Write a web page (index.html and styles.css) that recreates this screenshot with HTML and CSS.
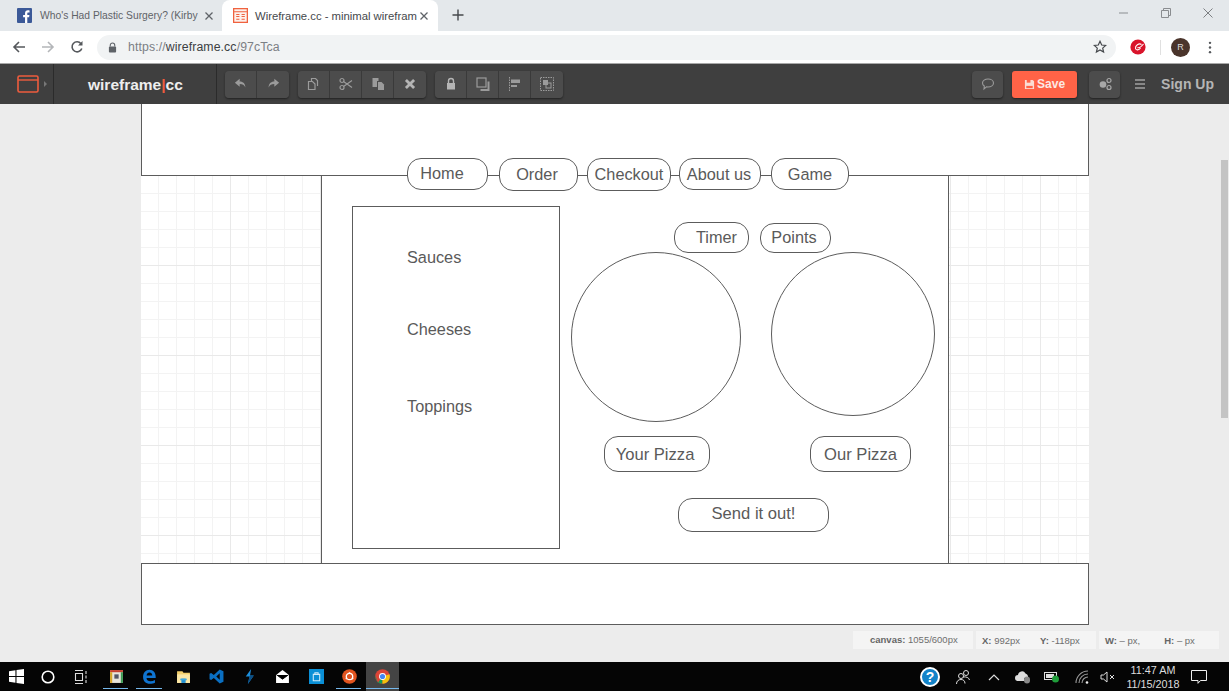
FILE: index.html
```html
<!DOCTYPE html>
<html>
<head>
<meta charset="utf-8"/>
<title>Wireframe.cc - minimal wireframing tool</title>
<link rel="stylesheet" href="styles.css">
</head>
<body>
<div class="tabstrip">
  <div class="tab tab-first">
    <svg class="tab-icon" viewBox="0 0 14 14"><rect width="14" height="14" rx="1" fill="#3b5998"/><path d="M9.6 14V8.6h1.7l.3-2.1h-2V5.2c0-.6.2-1 1-1h1.1V2.300c-.2 0-.8-.1-1.500-.1-1.600 0-2.700 1-2.700 2.700v1.600H5.700v2.100h1.800V14z" fill="#fff"/></svg>
    <span class="tab-title">Who's Had Plastic Surgery? (Kirby</span>
    <svg class="tab-close" viewBox="0 0 10 10"><path d="M1.500 1.500l7 7M8.500 1.500l-7 7" stroke="#5f6368" stroke-width="1.300"/></svg>
  </div>
  <div class="tab tab-active">
    <svg class="tab-icon" viewBox="0 0 14 14"><rect x=".6" y=".6" width="12.800" height="12.800" fill="#fdf1ec" stroke="#f0623f" stroke-width="1.200"/><path d="M1 3.500h12M3 6h3M3 8h3M3 10.500h3M8 6h3M8 8h3M8 10.500h3" stroke="#f0623f"/></svg>
    <span class="tab-title">Wireframe.cc - minimal wirefram</span>
    <svg class="tab-close" viewBox="0 0 10 10"><path d="M1.500 1.500l7 7M8.500 1.500l-7 7" stroke="#5f6368" stroke-width="1.300"/></svg>
  </div>
  <svg class="new-tab" viewBox="0 0 12 12"><path d="M6 .5v11M.5 6h11" stroke="#45484c" stroke-width="1.400"/></svg>
  <div class="window-btns">
    <svg viewBox="0 0 12 12"><path d="M1 6h9" stroke="#9a9da0" stroke-width="1.200"/></svg>
    <svg viewBox="0 0 12 12"><path d="M1.500 3.500h7v7h-7zM3.500 3.500v-2h7v7h-2" fill="none" stroke="#8a8d90"/></svg>
    <svg viewBox="0 0 12 12"><path d="M1.500 1.500l9 9M10.500 1.500l-9 9" stroke="#7c7f82"/></svg>
  </div>
</div>

<div class="addressbar">
  <svg class="nav-icon" viewBox="0 0 14 14"><path d="M13 7H2M7 2L2 7l5 5" fill="none" stroke="#55585c" stroke-width="1.600"/></svg>
  <svg class="nav-icon" viewBox="0 0 14 14"><path d="M1 7h11M7 2l5 5-5 5" fill="none" stroke="#b4b6b9" stroke-width="1.600"/></svg>
  <svg class="nav-icon" viewBox="0 0 14 14"><path d="M11.800 8.500A5 5 0 1 1 11 3.700" fill="none" stroke="#55585c" stroke-width="1.600"/><path d="M12.500 1v4.500H8z" fill="#55585c"/></svg>
  <div class="omnibox">
    <svg class="lock" viewBox="0 0 10 12"><path d="M2.500 5V3.500a2.500 2.500 0 0 1 5 0V5" fill="none" stroke="#5f6368" stroke-width="1.200"/><rect x="1" y="5" width="8" height="6.500" rx="1" fill="#5f6368"/></svg>
    <span class="url"><span class="url-dim">https://</span>wireframe.cc<span class="url-dim">/97cTca</span></span>
    <svg class="star" viewBox="0 0 14 14"><path d="M7 1.300l1.700 3.700 4 .4-3 2.700.9 4L7 10l-3.600 2.100.9-4-3-2.700 4-.4z" fill="none" stroke="#45484c" stroke-width="1.200"/></svg>
  </div>
  <svg class="trend" viewBox="0 0 16 16"><circle cx="8" cy="8" r="7.600" fill="#d9142b"/><path d="M11.500 5.500C9 3.800 5 6.500 5.500 9.500c.4 2 3.500 1.800 5-.5M7.500 8.500c1.500 1 3.500-.5 6-3.500" fill="none" stroke="#fff" stroke-width="1.100"/></svg>
  <span class="bar-sep"></span>
  <span class="avatar">R</span>
  <svg class="menu-dots" viewBox="0 0 4 14"><circle cx="2" cy="2" r="1.300" fill="#55585c"/><circle cx="2" cy="7" r="1.300" fill="#55585c"/><circle cx="2" cy="12" r="1.300" fill="#55585c"/></svg>
</div>

<div class="toolbar">
  <div class="tb-logo-icon">
    <svg class="pages-icon" viewBox="0 0 22 18"><rect x="1" y="1" width="20" height="16" rx="1.500" fill="none" stroke="#ee5c3e" stroke-width="1.600"/><path d="M1 5h20" stroke="#ee5c3e" stroke-width="1.400"/></svg>
    <span class="caret"></span>
  </div>
  <div class="tb-logo">wireframe<span class="logo-bar">|</span>cc</div>
  <div class="tb-groups">
    <div class="btn-group">
      <span class="tb-btn"><svg viewBox="0 0 16 14"><path d="M6.500 1L1 5.500 6.500 10V7c3.500 0 5 1 6.500 4 0-4.500-2.500-7-6.500-7z" fill="#9b9b9b"/></svg></span>
      <span class="tb-btn"><svg viewBox="0 0 16 14"><path d="M9.500 1L15 5.500 9.500 10V7C6 7 4.500 8 3 11c0-4.500 2.500-7 6.500-7z" fill="#9b9b9b"/></svg></span>
    </div>
    <div class="btn-group">
      <span class="tb-btn"><svg viewBox="0 0 14 14"><path d="M4.500 4V1.500h4l2 2V9M1.500 4.500h4l2.500 2.500v5.500H1.500z" fill="none" stroke="#9b9b9b" stroke-width="1.200"/></svg></span>
      <span class="tb-btn"><svg viewBox="0 0 14 14"><circle cx="3" cy="3.500" r="2" fill="none" stroke="#9b9b9b" stroke-width="1.200"/><circle cx="3" cy="10.500" r="2" fill="none" stroke="#9b9b9b" stroke-width="1.200"/><path d="M4.500 4.500l8.500 6M4.500 9.500l8.500-6" stroke="#9b9b9b" stroke-width="1.200"/></svg></span>
      <span class="tb-btn"><svg viewBox="0 0 14 14"><path d="M1.500 1h6v3H6v6H1.500z" fill="#9b9b9b"/><path d="M7 5h3.500L13 7.500V13H7z" fill="#9b9b9b"/></svg></span>
      <span class="tb-btn"><svg viewBox="0 0 12 12"><path d="M2.500 2.500l7 7M9.500 2.500l-7 7" stroke="#b5b5b5" stroke-width="2.400"/></svg></span>
    </div>
    <div class="btn-group">
      <span class="tb-btn"><svg viewBox="0 0 12 14"><path d="M3.500 6V4a2.500 2.500 0 0 1 5 0v2" fill="none" stroke="#b5b5b5" stroke-width="1.400"/><rect x="2" y="6" width="8" height="6.500" fill="#b5b5b5"/></svg></span>
      <span class="tb-btn"><svg viewBox="0 0 14 14"><rect x="1" y="1" width="9" height="9" fill="none" stroke="#9b9b9b" stroke-width="1.200"/><path d="M12.500 4.500v8.500H4.500" fill="none" stroke="#9b9b9b" stroke-width="2"/></svg></span>
      <span class="tb-btn"><svg viewBox="0 0 14 14"><path d="M1.500 0v14" stroke="#9b9b9b" stroke-width="1" stroke-dasharray="1.500 1"/><rect x="3" y="2.500" width="9" height="3.500" fill="#9b9b9b"/><rect x="3" y="8" width="6" height="2" fill="#9b9b9b"/></svg></span>
      <span class="tb-btn"><svg viewBox="0 0 14 14"><rect x=".5" y=".5" width="13" height="13" fill="none" stroke="#9b9b9b" stroke-dasharray="1.500 1"/><rect x="3" y="3" width="5" height="5" fill="#9b9b9b"/><rect x="6" y="6" width="5" height="5" fill="none" stroke="#9b9b9b"/></svg></span>
    </div>
  </div>
  <div class="tb-right">
    <span class="tb-btn tb-single"><svg viewBox="0 0 14 14"><path d="M7 2c3 0 5.500 1.700 5.500 4S10 10 7 10c-.6 0-1 0-1.500-.1L3 12l.3-3C2.200 8.300 1.500 7.200 1.500 6 1.500 3.700 4 2 7 2z" fill="none" stroke="#9b9b9b" stroke-width="1.100"/></svg></span>
    <span class="save-btn"><svg viewBox="0 0 12 12"><path d="M1 1h8.500L11 2.500V11H1z" fill="#fbdcd4"/><rect x="3" y="1" width="4" height="3" fill="#ff6347"/><rect x="2.500" y="7.500" width="7" height="2.500" fill="#ff6347"/></svg>Save</span>
    <span class="tb-btn tb-single"><svg viewBox="0 0 14 14"><circle cx="5" cy="7.500" r="3.300" fill="#a8a8a8"/><circle cx="11" cy="3.500" r="2" fill="none" stroke="#a8a8a8" stroke-width="1.200"/><circle cx="11" cy="10.500" r="2" fill="none" stroke="#a8a8a8" stroke-width="1.200"/></svg></span>
    <svg class="hamburger" viewBox="0 0 12 10"><path d="M1 1h10M1 5h10M1 9h10" stroke="#a0a0a0" stroke-width="1.300"/></svg>
    <span class="signup">Sign Up</span>
  </div>
</div>

<div class="workspace">
  <div class="canvas">
    <div class="wf wf-header"></div>
    <div class="wf wf-main"></div>
    <div class="wf wf-footer"></div>
    <div class="wf wf-sidebar"></div>
    <span class="wf-text label-sauces">Sauces</span>
    <span class="wf-text label-cheeses">Cheeses</span>
    <span class="wf-text label-toppings">Toppings</span>

    <div class="wf pill nav-home">Home</div>
    <div class="wf pill nav-order">Order</div>
    <div class="wf pill nav-checkout">Checkout</div>
    <div class="wf pill nav-about">About us</div>
    <div class="wf pill nav-game">Game</div>

    <div class="wf pill pill-timer">Timer</div>
    <div class="wf pill pill-points">Points</div>
    <div class="wf circle circle-yours"></div>
    <div class="wf circle circle-ours"></div>
    <div class="wf pill pill-big pill-yours">Your Pizza</div>
    <div class="wf pill pill-big pill-ours">Our Pizza</div>
    <div class="wf pill pill-big pill-send">Send it out!</div>
  </div>
  <div class="scroll-thumb"></div>
  <div class="status">
    <span class="status-box status-canvas"><b>canvas:</b> 1055/600px</span>
    <span class="status-box status-xy"><span><b>X:</b> 992px</span><span><b>Y:</b> -118px</span></span>
    <span class="status-box status-wh"><span><b>W:</b> – px,</span><span><b>H:</b> – px</span></span>
  </div>
</div>

<div class="taskbar">
  <div class="task-left">
    <svg class="tk-win" viewBox="0 0 14 14"><path d="M0 2l6-.9v5.500H0zM7 1l7-1v6.600H7zM0 7.400h6v5.500l-6-.9zM7 7.400h7V14l-7-1z" fill="#fff"/></svg>
    <svg class="tk-cortana" viewBox="0 0 14 14"><circle cx="7" cy="7" r="5.800" fill="none" stroke="#fff" stroke-width="1.600"/></svg>
    <svg class="tk-view" viewBox="0 0 14 14"><path d="M1 .5h8M1 13.500h8M1.500 3.500h7v7h-7zM12 1v3M12 5.500v3M12 10v3" fill="none" stroke="#ddd" stroke-width="1.100"/></svg>
    <span class="tk-app tk-open"><svg viewBox="0 0 14 14"><rect x="1" y="1" width="12" height="12" fill="#e8e4da"/><path d="M1 1h12v2H1z" fill="#c8402e"/><path d="M11 3h2v10h-2z" fill="#3e9b55"/><path d="M1 3h2v10H1z" fill="#d8a524"/><rect x="5" y="5" width="4" height="4" fill="#556"/></svg></span>
    <span class="tk-app tk-open"><svg viewBox="0 0 14 14"><path d="M1 7.500C1 3.500 3.500.8 7 .8c3.600 0 5.800 2.700 5.800 6.700v1H4.200c.2 2 1.600 3 3.600 3 1.500 0 3-.4 4.300-1.200v2.500c-1.300.7-2.900 1-4.700 1C3.500 13.800 1 11.500 1 7.500zm3.300-1.500h5.300C9.500 4.300 8.500 3.200 7 3.200 5.500 3.200 4.500 4.300 4.300 6z" fill="#0f74d1"/></svg></span>
    <span class="tk-app"><svg viewBox="0 0 14 14"><path d="M1 2h5l1 1.500h6V13H1z" fill="#f3cf6b"/><path d="M1 5h12v8H1z" fill="#fbe7a6"/><path d="M5 13V9h4v4" fill="#1f8ed1"/><path d="M4 9h6v1.500H4z" fill="#3fa9e0"/></svg></span>
    <span class="tk-app"><svg viewBox="0 0 14 14"><path d="M10 .5l3.500 1.700v9.600L10 13.500 4.500 8.300 2 10.300.5 9.500V4.500L2 3.700l2.500 2zM10 4L6.800 7 10 10z" fill="#0a6fc2"/></svg></span>
    <span class="tk-app"><svg viewBox="0 0 14 14"><path d="M8.500 0L3.500 7H7l-1.500 7 5.500-8H7.500z" fill="#1d8fdc"/><path d="M7 7l-1.500 7 5.500-8H7.500z" fill="#0c4f86"/></svg></span>
    <span class="tk-app"><svg viewBox="0 0 14 14"><path d="M1 5.500L7 1l6 4.500V13H1z" fill="#fff"/><path d="M1.500 5.500L7 9.500l5.500-4" fill="#000" stroke="#000" stroke-width=".8"/></svg></span>
    <span class="tk-app"><svg viewBox="0 0 14 14"><rect width="14" height="14" fill="#0a8fd6"/><path d="M4 5h6v6H4zM5.500 5V3.500h3V5" fill="none" stroke="#cfeaf8"/></svg></span>
    <span class="tk-app tk-open"><svg viewBox="0 0 14 14"><circle cx="7" cy="7" r="6.800" fill="#e2541f"/><circle cx="7" cy="7" r="3" fill="none" stroke="#fff" stroke-width="1.200"/><path d="M7 4v-1M4.500 8.500l-1 .6M9.500 8.500l1 .6" stroke="#fff" stroke-width="1.400"/></svg></span>
    <span class="tk-app tk-open tk-active"><svg viewBox="0 0 14 14"><circle cx="7" cy="7" r="6.800" fill="#db4437"/><path d="M7 7L2.500 13 .5 6A6.800 6.800 0 0 0 7 13.800z" fill="#0f9d58"/><path d="M7 7l6.500-2a6.800 6.800 0 0 1-6.500 8.800z" fill="#f4c20d"/><circle cx="7" cy="7" r="3.200" fill="#fff"/><circle cx="7" cy="7" r="2.400" fill="#4285f4"/></svg></span>
  </div>
  <div class="task-right">
    <span class="help-icon">?</span>
    <svg class="tray tray-people" viewBox="0 0 16 16"><circle cx="6" cy="7" r="2.500" fill="none" stroke="#ddd"/><circle cx="11" cy="4" r="2.500" fill="none" stroke="#ddd"/><path d="M1.500 15c0-3 2-4.500 4.500-4.500s4 1.500 4 4M8 8c3-.5 6 .5 6.500 3" fill="none" stroke="#ddd"/></svg>
    <svg class="tray tray-up" viewBox="0 0 12 8"><path d="M1 7l5-5 5 5" fill="none" stroke="#ddd" stroke-width="1.200"/></svg>
    <svg class="tray tray-cloud" viewBox="0 0 16 14"><path d="M3 11a3 3 0 0 1 0-6 4 4 0 0 1 7.500-1.500A3.500 3.500 0 0 1 13 6v2H9v3z" fill="#ddd"/><rect x="9" y="6.500" width="6" height="7" rx="3" fill="#888"/></svg>
    <svg class="tray tray-batt" viewBox="0 0 16 12"><rect x=".5" y="1.500" width="12" height="7" fill="none" stroke="#ddd"/><rect x="2" y="3" width="8" height="4" fill="#ddd"/><circle cx="11.500" cy="8" r="3.500" fill="#1f9d3a"/></svg>
    <svg class="tray tray-wifi" viewBox="0 0 14 14"><path d="M1 13A12 12 0 0 1 13 1M4 13a9 9 0 0 1 9-9M7 13a6 6 0 0 1 6-6" fill="none" stroke="#999" stroke-width="1.100"/><circle cx="12" cy="12.500" r="1.300" fill="#eee"/></svg>
    <svg class="tray tray-vol" viewBox="0 0 16 12"><path d="M1 4h2.500L7 1v10L3.500 8H1z" fill="none" stroke="#ddd"/><path d="M10 4l4 4M14 4l-4 4" stroke="#ddd"/></svg>
    <div class="clock"><span>11:47 AM</span><span>11/15/2018</span></div>
    <svg class="tray tray-note" viewBox="0 0 16 14"><path d="M.5.500h15v10H9.500L7 13.300V10.500H.5z" fill="none" stroke="#eee"/></svg>
  </div>
</div>
</body>
</html>
```

FILE: styles.css
```css
html, body {
  margin: 0;
  padding: 0;
  height: 100%;
  overflow: hidden;
}
body {
  display: flex;
  flex-direction: column;
  width: 1229px;
  height: 691px;
  font-family: "Liberation Sans", Arial, sans-serif;
  background: #ececec;
}
svg { display: block; flex: none; }

/* browser tabs */
.tabstrip {
  display: flex;
  align-items: flex-end;
  height: 31px;
  background: #e4e8eb;
  padding-left: 8px;
  flex: none;
}
.tab {
  display: flex;
  align-items: center;
  height: 31px;
  box-sizing: border-box;
  color: #5f6368;
}
.tab-first {
  width: 214px;
  padding: 0 8px 0 9px;
  font-size: 10.300px;
}
.tab-first .tab-icon { margin-right: 8px; }
.tab-active {
  width: 216px;
  padding: 0 9px 0 11px;
  font-size: 11.300px;
  background: #fff;
  border-radius: 8px 8px 0 0;
  color: #45484c;
}
.tab-icon { width: 15px; height: 15px; margin-right: 7px; }
.tab-title {
  flex: 1;
  white-space: nowrap;
}
.tab-close { width: 10px; height: 10px; }
.new-tab { width: 12px; height: 12px; margin: 0 0 10px 14px; }
.window-btns {
  display: flex;
  gap: 30px;
  margin: 0 15px 12px auto;
}
.window-btns svg { width: 12px; height: 12px; }

/* address bar */
.addressbar {
  display: flex;
  align-items: center;
  height: 33px;
  box-sizing: border-box;
  background: #fff;
  border-bottom: 1px solid #a8a8a8;
  flex: none;
}
.nav-icon { width: 14px; height: 14px; margin-left: 12px; margin-right: 3px; }
.omnibox {
  display: flex;
  align-items: center;
  width: 1019px;
  height: 25px;
  margin-left: 10px;
  background: #f1f3f4;
  border-radius: 13px;
  padding-left: 11px;
  box-sizing: border-box;
}
.lock { width: 9px; height: 11px; margin-right: 11px; }
.url { font-size: 12.300px; color: #3c4043; flex: 1; letter-spacing: .1px; }
.url-dim { color: #7c8085; }
.star { width: 14px; height: 14px; margin-right: 9px; }
.trend { width: 16px; height: 16px; margin-left: 14px; }
.bar-sep { width: 1px; height: 15px; background: #e0e0e0; margin-left: 14px; }
.avatar {
  width: 19px;
  height: 19px;
  margin-left: 10px;
  border-radius: 50%;
  background: #4a342b;
  color: #ddd;
  font-size: 9px;
  line-height: 19px;
  text-align: center;
}
.menu-dots { width: 4px; height: 13px; margin-left: 18px; }

/* wireframe.cc toolbar */
.toolbar {
  display: flex;
  align-items: center;
  height: 40px;
  background: #3f3f3f;
  flex: none;
  color: #ddd;
}
.tb-logo-icon {
  display: flex;
  align-items: center;
  gap: 5px;
  width: 36px;
  height: 100%;
  padding-left: 17px;
  border-right: 1px solid #2b2b2b;
}
.pages-icon { width: 22px; height: 18px; }
.caret {
  width: 0;
  height: 0;
  border-left: 3px solid #777;
  border-top: 3px solid transparent;
  border-bottom: 3px solid transparent;
}
.tb-logo {
  width: 128px;
  height: 100%;
  padding-left: 34px;
  line-height: 41px;
  font-size: 15.500px;
  font-weight: bold;
  color: #eee;
  border-right: 1px solid #2b2b2b;
}
.logo-bar { color: #ee5c3e; font-weight: bold; }
.tb-groups {
  display: flex;
  gap: 9px;
  margin-left: 8px;
}
.btn-group {
  display: flex;
  border-radius: 4px;
  overflow: hidden;
  box-shadow: 0 1px 2px #222;
}
.tb-btn {
  display: flex;
  align-items: center;
  justify-content: center;
  width: 32px;
  height: 27px;
  background: #4c4c4c;
  border-right: 1px solid #3a3a3a;
  box-sizing: border-box;
}
.btn-group .tb-btn:last-child { border-right: 0; }
.tb-btn svg { width: 14px; height: 14px; }
.tb-right {
  display: flex;
  align-items: center;
  margin-left: auto;
  padding-right: 15px;
}
.tb-single {
  width: 31px;
  border-radius: 4px;
  border-right: 0;
  box-shadow: 0 1px 2px #222;
}
.save-btn {
  display: flex;
  align-items: center;
  justify-content: center;
  gap: 2px;
  width: 65px;
  height: 27px;
  margin: 0 12px 0 9px;
  border-radius: 3px;
  background: #ff6347;
  color: #fce9e4;
  font-size: 12px;
  font-weight: bold;
  box-shadow: 0 1px 2px #222;
}
.save-btn svg { width: 11px; height: 11px; }
.hamburger { width: 12px; height: 10px; margin: 0 15px 0 14px; }
.signup {
  font-size: 14px;
  font-weight: bold;
  color: #b5b5b5;
}

/* drawing area */
.workspace {
  position: relative;
  flex: 1;
  background: #ececec;
  overflow: hidden;
}
.canvas {
  position: absolute;
  left: 141px;
  top: 0;
  width: 948px;
  height: 521px;
  background-color: #fff;
  background-image:
    linear-gradient(#e9e9e9 1px, transparent 1px),
    linear-gradient(90deg, #e9e9e9 1px, transparent 1px),
    linear-gradient(#f3f3f3 1px, transparent 1px),
    linear-gradient(90deg, #f3f3f3 1px, transparent 1px);
  background-size: 90px 90px, 90px 90px, 18px 18px, 18px 18px;
  background-position: 0 71px, 89px 0, 0 17px, 17px 0;
}
.wf {
  position: absolute;
  box-sizing: border-box;
  background: #fff;
  border: 1px solid #5c5c5c;
}
.wf-header { left: 0; top: -4px; width: 948px; height: 76px; }
.wf-main { left: 180px; top: 71px; width: 628px; height: 389px; }
.wf-footer { left: 0; top: 459px; width: 948px; height: 62px; }
.wf-sidebar { left: 211px; top: 102px; width: 208px; height: 343px; }
.wf-text {
  position: absolute;
  font-size: 16.300px;
  line-height: 20px;
  color: #5a5a5a;
}
.label-sauces { left: 266px; top: 143px; }
.label-cheeses { left: 266px; top: 215px; }
.label-toppings { left: 266px; top: 292px; }

.pill {
  display: flex;
  align-items: center;
  justify-content: center;
  border-radius: 14px;
  font-size: 16.300px;
  color: #5a5a5a;
  white-space: nowrap;
}
.pill-big { font-size: 16.600px; }
.nav-home { left: 266px; top: 54px; width: 81px; height: 32px; padding-right: 11px; padding-bottom: 1px; }
.nav-order { left: 358px; top: 54px; width: 79px; height: 33px; padding-right: 3px; }
.nav-checkout { left: 446px; top: 54px; width: 84px; height: 33px; }
.nav-about { left: 538px; top: 54px; width: 82px; height: 32px; padding-right: 2px; }
.nav-game { left: 630px; top: 54px; width: 78px; height: 32px; }
.pill-timer { left: 533px; top: 118px; width: 75px; height: 31px; padding-left: 10px; }
.pill-points { left: 619px; top: 119px; width: 71px; height: 30px; padding-right: 3px; padding-bottom: 2px; }
.circle { border-radius: 50%; background: transparent; }
.circle-yours { left: 430px; top: 148px; width: 170px; height: 170px; }
.circle-ours { left: 630px; top: 148px; width: 164px; height: 164px; }
.pill-yours { left: 463px; top: 332px; width: 106px; height: 36px; padding-right: 4px; padding-top: 1px; }
.pill-ours { left: 669px; top: 332px; width: 101px; height: 36px; padding-top: 1px; }
.pill-send { left: 537px; top: 394px; width: 151px; height: 34px; padding-bottom: 3px; }

.scroll-thumb {
  position: absolute;
  right: 1px;
  top: 56px;
  width: 7px;
  height: 258px;
  background: #c4c4c4;
}
.status {
  position: absolute;
  left: 853px;
  top: 527px;
  display: flex;
  gap: 3px;
  font-size: 9.500px;
  color: #6e6e6e;
}
.status-box {
  display: flex;
  align-items: center;
  height: 18px;
  background: #f4f4f4;
  box-sizing: border-box;
  white-space: nowrap;
}
.status-box b { color: #666; }
.status-canvas { width: 120px; padding-left: 17px; display: block; line-height: 18px; }
.status-xy { width: 120px; padding-left: 6px; gap: 20px; }
.status-wh { width: 120px; padding-left: 6px; gap: 24px; }

/* windows taskbar */
.taskbar {
  display: flex;
  align-items: center;
  justify-content: space-between;
  height: 29px;
  background: #050505;
  flex: none;
}
.task-left { display: flex; align-items: center; height: 100%; }
.tk-win { width: 15px; height: 15px; margin-left: 9px; }
.tk-cortana { width: 14px; height: 14px; margin-left: 17px; }
.tk-view { width: 14px; height: 14px; margin-left: 19px; margin-right: 12px; }
.tk-app {
  position: relative;
  display: flex;
  align-items: center;
  justify-content: center;
  width: 33.250px;
  height: 100%;
  box-sizing: border-box;
}
.tk-app svg { width: 15px; height: 15px; }
.tk-open::after {
  content: "";
  position: absolute;
  left: 3px;
  right: 5px;
  bottom: 2px;
  height: 1px;
  background: #76b9ed;
}
.tk-active { background: #444; }
.tk-active::after { left: 0; right: 0; }
.task-right {
  display: flex;
  align-items: center;
  height: 100%;
  padding-right: 22px;
}
.help-icon {
  width: 20px;
  height: 20px;
  box-sizing: border-box;
  border: 2px solid #fff;
  border-radius: 50%;
  background: #1283c9;
  color: #fff;
  font-size: 14px;
  font-weight: bold;
  line-height: 16px;
  text-align: center;
}
.tray-people { width: 16px; height: 16px; margin-left: 15px; }
.tray-up { width: 12px; height: 8px; margin-left: 17px; }
.tray-cloud { width: 16px; height: 14px; margin-left: 15px; }
.tray-batt { width: 16px; height: 12px; margin-left: 13px; }
.tray-wifi { width: 14px; height: 14px; margin-left: 15px; }
.tray-vol { width: 16px; height: 12px; margin-left: 11px; }
.clock {
  display: flex;
  flex-direction: column;
  align-items: center;
  width: 56px;
  margin-left: 9px;
  font-size: 10.800px;
  line-height: 14px;
  color: #ddd;
}
.tray-note { width: 16px; height: 14px; margin-left: 10px; }
```
